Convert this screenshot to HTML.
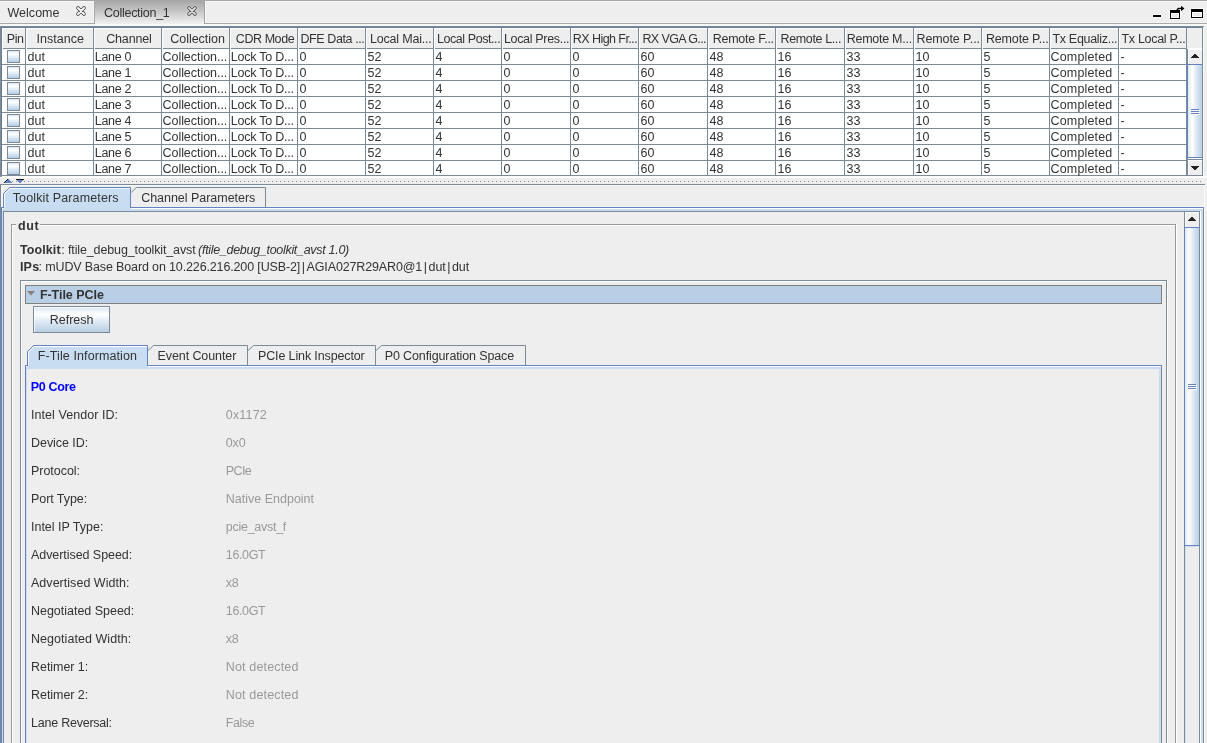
<!DOCTYPE html><html><head><meta charset='utf-8'><title>Collection_1</title><style>
*{box-sizing:border-box;margin:0;padding:0}
html,body{width:1207px;height:743px;overflow:hidden;background:#eee}
body{position:relative;font-family:"Liberation Sans","DejaVu Sans",sans-serif;font-size:12.5px;color:#333;line-height:16px}
#root{position:absolute;left:0;top:0;width:1207px;height:743px;overflow:hidden;will-change:transform}
.a{position:absolute}
.t{position:absolute;white-space:nowrap}
b{font-weight:bold}
</style></head><body>
<div id='root'>
<div class="a" style="left:0px;top:0px;width:1207px;height:1px;background:#a6a6a6"></div>
<div class="a" style="left:0px;top:1px;width:1207px;height:1px;background:#f5f5f5"></div>
<div class="a" style="left:0px;top:22px;width:1207px;height:1px;background:#f3f3f3"></div>
<div class="a" style="left:0px;top:23px;width:1207px;height:1px;background:#a8a8a8"></div>
<div class="a" style="left:0px;top:24px;width:1207px;height:2px;background:#f7f7f7"></div>
<div class="a" style="left:93px;top:1px;width:1px;height:22px;background:#f5f5f5"></div>
<div class="a" style="left:94px;top:1px;width:1px;height:23px;background:#a8a8a8"></div>
<div class="t" style="left:7.5px;top:5px;;letter-spacing:0.02px">Welcome</div>
<div class="a" style="left:95px;top:0px;width:109px;height:24px;background:linear-gradient(#a4a4a4,#c4c4c4 45%,#eeeeee 96%)"></div>
<div class="a" style="left:204px;top:1px;width:1px;height:23px;background:#a0a0a0"></div>
<div class="a" style="left:205px;top:2px;width:1px;height:21px;background:#f9f9f9"></div>
<div class="t" style="left:104.0px;top:5px;;letter-spacing:-0.27px">Collection_1</div>
<svg class="a" style="left:74px;top:4px" width="14" height="14" viewBox="-7 -7 14 14"><g fill="none" stroke-linecap="round"><path d="M-3 -3 L3 3 M3 -3 L-3 3" stroke="#fff" stroke-opacity=".4" stroke-width="5.2"/><path d="M-3 -3 L3 3 M3 -3 L-3 3" stroke="#444" stroke-width="3.7"/><path d="M-3 -3 L3 3 M3 -3 L-3 3" stroke="#f6f6f6" stroke-width="2.1"/></g></svg>
<svg class="a" style="left:185px;top:4px" width="14" height="14" viewBox="-7 -7 14 14"><g fill="none" stroke-linecap="round"><path d="M-3 -3 L3 3 M3 -3 L-3 3" stroke="#fff" stroke-opacity=".4" stroke-width="5.2"/><path d="M-3 -3 L3 3 M3 -3 L-3 3" stroke="#444" stroke-width="3.7"/><path d="M-3 -3 L3 3 M3 -3 L-3 3" stroke="#d8d8d8" stroke-width="2.1"/></g></svg>
<div class="a" style="left:1152px;top:14px;width:10px;height:4px;background:#fafafa"></div>
<div class="a" style="left:1153px;top:15px;width:8px;height:2px;background:#000"></div>
<svg class="a" style="left:1168px;top:4px" width="20" height="17" viewBox="0 0 20 17"><rect x="1" y="5" width="12" height="11" fill="#fafafa"/><path d="M8.5 6.5 L10 4.5 L14 4.5" fill="none" stroke="#fafafa" stroke-width="3.4"/><path d="M12.4 0.6 L17.4 4.5 L12.4 8.4 Z" fill="#fafafa"/><rect x="2" y="6" width="10" height="9" fill="#000"/><rect x="3" y="9" width="8" height="5" fill="#fff"/><rect x="4" y="10" width="6" height="3" fill="#eaeaea"/><path d="M8.7 6.6 L10.2 4.5 L14 4.5" fill="none" stroke="#000" stroke-width="1.5"/><path d="M13 1.7 L16.5 4.5 L13 7.3 Z" fill="#000"/></svg>
<div class="a" style="left:1190px;top:8px;width:14px;height:11px;background:#fafafa"></div>
<div class="a" style="left:1191px;top:9px;width:12px;height:9px;background:#000"></div>
<div class="a" style="left:1192px;top:12px;width:10px;height:5px;background:#fff"></div>
<div class="a" style="left:1193px;top:13px;width:8px;height:3px;background:#eaeaea"></div>
<div class="a" style="left:0px;top:26px;width:1203px;height:150px;background:#fff;border:1px solid #7a8a99"></div>
<div class="a" style="left:1px;top:27px;width:1201px;height:1px;background:#6f8092"></div>
<div class="a" style="left:1px;top:27px;width:1px;height:148px;background:#6f8092"></div>
<div class="a" style="left:1203px;top:26px;width:1px;height:1px;background:#7a8a99"></div>
<div class="a" style="left:2px;top:28px;width:1200px;height:20px;background:#eee"></div>
<div class="a" style="left:2px;top:28px;width:1185px;height:1px;background:#fff"></div>
<div class="a" style="left:2px;top:48px;width:1185px;height:1px;background:#7a8a99"></div>
<div class="a" style="left:25px;top:28px;width:1px;height:147px;background:#7a8a99"></div>
<div class="a" style="left:26px;top:28px;width:1px;height:21px;background:#fff"></div>
<div class="a" style="left:93px;top:28px;width:1px;height:147px;background:#7a8a99"></div>
<div class="a" style="left:94px;top:28px;width:1px;height:21px;background:#fff"></div>
<div class="a" style="left:161px;top:28px;width:1px;height:147px;background:#7a8a99"></div>
<div class="a" style="left:162px;top:28px;width:1px;height:21px;background:#fff"></div>
<div class="a" style="left:229px;top:28px;width:1px;height:147px;background:#7a8a99"></div>
<div class="a" style="left:230px;top:28px;width:1px;height:21px;background:#fff"></div>
<div class="a" style="left:297px;top:28px;width:1px;height:147px;background:#7a8a99"></div>
<div class="a" style="left:298px;top:28px;width:1px;height:21px;background:#fff"></div>
<div class="a" style="left:365px;top:28px;width:1px;height:147px;background:#7a8a99"></div>
<div class="a" style="left:366px;top:28px;width:1px;height:21px;background:#fff"></div>
<div class="a" style="left:433px;top:28px;width:1px;height:147px;background:#7a8a99"></div>
<div class="a" style="left:434px;top:28px;width:1px;height:21px;background:#fff"></div>
<div class="a" style="left:501px;top:28px;width:1px;height:147px;background:#7a8a99"></div>
<div class="a" style="left:502px;top:28px;width:1px;height:21px;background:#fff"></div>
<div class="a" style="left:570px;top:28px;width:1px;height:147px;background:#7a8a99"></div>
<div class="a" style="left:571px;top:28px;width:1px;height:21px;background:#fff"></div>
<div class="a" style="left:638px;top:28px;width:1px;height:147px;background:#7a8a99"></div>
<div class="a" style="left:639px;top:28px;width:1px;height:21px;background:#fff"></div>
<div class="a" style="left:707px;top:28px;width:1px;height:147px;background:#7a8a99"></div>
<div class="a" style="left:708px;top:28px;width:1px;height:21px;background:#fff"></div>
<div class="a" style="left:775px;top:28px;width:1px;height:147px;background:#7a8a99"></div>
<div class="a" style="left:776px;top:28px;width:1px;height:21px;background:#fff"></div>
<div class="a" style="left:844px;top:28px;width:1px;height:147px;background:#7a8a99"></div>
<div class="a" style="left:845px;top:28px;width:1px;height:21px;background:#fff"></div>
<div class="a" style="left:913px;top:28px;width:1px;height:147px;background:#7a8a99"></div>
<div class="a" style="left:914px;top:28px;width:1px;height:21px;background:#fff"></div>
<div class="a" style="left:981px;top:28px;width:1px;height:147px;background:#7a8a99"></div>
<div class="a" style="left:982px;top:28px;width:1px;height:21px;background:#fff"></div>
<div class="a" style="left:1049px;top:28px;width:1px;height:147px;background:#7a8a99"></div>
<div class="a" style="left:1050px;top:28px;width:1px;height:21px;background:#fff"></div>
<div class="a" style="left:1118px;top:28px;width:1px;height:147px;background:#7a8a99"></div>
<div class="a" style="left:1119px;top:28px;width:1px;height:21px;background:#fff"></div>
<div class="a" style="left:1186px;top:28px;width:1px;height:147px;background:#7a8a99"></div>
<div class="a" style="left:2px;top:28px;width:1px;height:21px;background:#fff"></div>
<div class="a" style="left:2px;top:64px;width:1185px;height:1px;background:#7a8a99"></div>
<div class="a" style="left:2px;top:80px;width:1185px;height:1px;background:#7a8a99"></div>
<div class="a" style="left:2px;top:96px;width:1185px;height:1px;background:#7a8a99"></div>
<div class="a" style="left:2px;top:112px;width:1185px;height:1px;background:#7a8a99"></div>
<div class="a" style="left:2px;top:128px;width:1185px;height:1px;background:#7a8a99"></div>
<div class="a" style="left:2px;top:144px;width:1185px;height:1px;background:#7a8a99"></div>
<div class="a" style="left:2px;top:160px;width:1185px;height:1px;background:#7a8a99"></div>
<div class="t" style="left:6.8px;top:31px;;letter-spacing:-0.44px">Pin</div>
<div class="t" style="left:36.6px;top:31px;;letter-spacing:0.03px">Instance</div>
<div class="t" style="left:106.2px;top:31px;;letter-spacing:-0.16px">Channel</div>
<div class="t" style="left:170.2px;top:31px;;letter-spacing:-0.01px">Collection</div>
<div class="t" style="left:235.8px;top:31px;;letter-spacing:-0.43px">CDR Mode</div>
<div class="t" style="left:300.4px;top:31px;;letter-spacing:-0.40px">DFE Data ...</div>
<div class="t" style="left:370.0px;top:31px;;letter-spacing:-0.19px">Local Mai...</div>
<div class="t" style="left:436.9px;top:31px;;letter-spacing:-0.42px">Local Post...</div>
<div class="t" style="left:503.9px;top:31px;;letter-spacing:-0.32px">Local Pres...</div>
<div class="t" style="left:572.8px;top:31px;;letter-spacing:-0.56px">RX High Fr...</div>
<div class="t" style="left:642.4px;top:31px;;letter-spacing:-0.60px">RX VGA G...</div>
<div class="t" style="left:712.7px;top:31px;;letter-spacing:-0.25px">Remote F...</div>
<div class="t" style="left:780.6px;top:31px;;letter-spacing:-0.38px">Remote L...</div>
<div class="t" style="left:846.7px;top:31px;;letter-spacing:-0.26px">Remote M...</div>
<div class="t" style="left:916.5px;top:31px;;letter-spacing:-0.09px">Remote P...</div>
<div class="t" style="left:985.9px;top:31px;;letter-spacing:-0.15px">Remote P...</div>
<div class="t" style="left:1052.4px;top:31px;;letter-spacing:-0.30px">Tx Equaliz...</div>
<div class="t" style="left:1121.5px;top:31px;;letter-spacing:-0.30px">Tx Local P...</div>
<div class="a" style="left:7px;top:50px;width:13px;height:13px;border:1px solid #7a8a99;background:linear-gradient(#dde8f3 0%,#fff 28%,#dde8f3 60%,#b8cfe5 100%)"></div>
<div class="t" style="left:27.5px;top:49px;">dut</div>
<div class="t" style="left:94.8px;top:49px;;letter-spacing:-0.33px">Lane 0</div>
<div class="t" style="left:162.5px;top:49px;;letter-spacing:-0.04px">Collection...</div>
<div class="t" style="left:230.8px;top:49px;;letter-spacing:-0.24px">Lock To D...</div>
<div class="t" style="left:299.5px;top:49px;">0</div>
<div class="t" style="left:367.5px;top:49px;">52</div>
<div class="t" style="left:435.5px;top:49px;">4</div>
<div class="t" style="left:503.5px;top:49px;">0</div>
<div class="t" style="left:572.5px;top:49px;">0</div>
<div class="t" style="left:640.5px;top:49px;">60</div>
<div class="t" style="left:709.5px;top:49px;">48</div>
<div class="t" style="left:777.5px;top:49px;">16</div>
<div class="t" style="left:846.5px;top:49px;">33</div>
<div class="t" style="left:915.5px;top:49px;">10</div>
<div class="t" style="left:983.5px;top:49px;">5</div>
<div class="t" style="left:1050.5px;top:49px;;letter-spacing:0.17px">Completed</div>
<div class="t" style="left:1120.5px;top:49px;">-</div>
<div class="a" style="left:7px;top:66px;width:13px;height:13px;border:1px solid #7a8a99;background:linear-gradient(#dde8f3 0%,#fff 28%,#dde8f3 60%,#b8cfe5 100%)"></div>
<div class="t" style="left:27.5px;top:65px;">dut</div>
<div class="t" style="left:94.8px;top:65px;;letter-spacing:-0.33px">Lane 1</div>
<div class="t" style="left:162.5px;top:65px;;letter-spacing:-0.04px">Collection...</div>
<div class="t" style="left:230.8px;top:65px;;letter-spacing:-0.24px">Lock To D...</div>
<div class="t" style="left:299.5px;top:65px;">0</div>
<div class="t" style="left:367.5px;top:65px;">52</div>
<div class="t" style="left:435.5px;top:65px;">4</div>
<div class="t" style="left:503.5px;top:65px;">0</div>
<div class="t" style="left:572.5px;top:65px;">0</div>
<div class="t" style="left:640.5px;top:65px;">60</div>
<div class="t" style="left:709.5px;top:65px;">48</div>
<div class="t" style="left:777.5px;top:65px;">16</div>
<div class="t" style="left:846.5px;top:65px;">33</div>
<div class="t" style="left:915.5px;top:65px;">10</div>
<div class="t" style="left:983.5px;top:65px;">5</div>
<div class="t" style="left:1050.5px;top:65px;;letter-spacing:0.17px">Completed</div>
<div class="t" style="left:1120.5px;top:65px;">-</div>
<div class="a" style="left:7px;top:82px;width:13px;height:13px;border:1px solid #7a8a99;background:linear-gradient(#dde8f3 0%,#fff 28%,#dde8f3 60%,#b8cfe5 100%)"></div>
<div class="t" style="left:27.5px;top:81px;">dut</div>
<div class="t" style="left:94.8px;top:81px;;letter-spacing:-0.33px">Lane 2</div>
<div class="t" style="left:162.5px;top:81px;;letter-spacing:-0.04px">Collection...</div>
<div class="t" style="left:230.8px;top:81px;;letter-spacing:-0.24px">Lock To D...</div>
<div class="t" style="left:299.5px;top:81px;">0</div>
<div class="t" style="left:367.5px;top:81px;">52</div>
<div class="t" style="left:435.5px;top:81px;">4</div>
<div class="t" style="left:503.5px;top:81px;">0</div>
<div class="t" style="left:572.5px;top:81px;">0</div>
<div class="t" style="left:640.5px;top:81px;">60</div>
<div class="t" style="left:709.5px;top:81px;">48</div>
<div class="t" style="left:777.5px;top:81px;">16</div>
<div class="t" style="left:846.5px;top:81px;">33</div>
<div class="t" style="left:915.5px;top:81px;">10</div>
<div class="t" style="left:983.5px;top:81px;">5</div>
<div class="t" style="left:1050.5px;top:81px;;letter-spacing:0.17px">Completed</div>
<div class="t" style="left:1120.5px;top:81px;">-</div>
<div class="a" style="left:7px;top:98px;width:13px;height:13px;border:1px solid #7a8a99;background:linear-gradient(#dde8f3 0%,#fff 28%,#dde8f3 60%,#b8cfe5 100%)"></div>
<div class="t" style="left:27.5px;top:97px;">dut</div>
<div class="t" style="left:94.8px;top:97px;;letter-spacing:-0.33px">Lane 3</div>
<div class="t" style="left:162.5px;top:97px;;letter-spacing:-0.04px">Collection...</div>
<div class="t" style="left:230.8px;top:97px;;letter-spacing:-0.24px">Lock To D...</div>
<div class="t" style="left:299.5px;top:97px;">0</div>
<div class="t" style="left:367.5px;top:97px;">52</div>
<div class="t" style="left:435.5px;top:97px;">4</div>
<div class="t" style="left:503.5px;top:97px;">0</div>
<div class="t" style="left:572.5px;top:97px;">0</div>
<div class="t" style="left:640.5px;top:97px;">60</div>
<div class="t" style="left:709.5px;top:97px;">48</div>
<div class="t" style="left:777.5px;top:97px;">16</div>
<div class="t" style="left:846.5px;top:97px;">33</div>
<div class="t" style="left:915.5px;top:97px;">10</div>
<div class="t" style="left:983.5px;top:97px;">5</div>
<div class="t" style="left:1050.5px;top:97px;;letter-spacing:0.17px">Completed</div>
<div class="t" style="left:1120.5px;top:97px;">-</div>
<div class="a" style="left:7px;top:114px;width:13px;height:13px;border:1px solid #7a8a99;background:linear-gradient(#dde8f3 0%,#fff 28%,#dde8f3 60%,#b8cfe5 100%)"></div>
<div class="t" style="left:27.5px;top:113px;">dut</div>
<div class="t" style="left:94.8px;top:113px;;letter-spacing:-0.33px">Lane 4</div>
<div class="t" style="left:162.5px;top:113px;;letter-spacing:-0.04px">Collection...</div>
<div class="t" style="left:230.8px;top:113px;;letter-spacing:-0.24px">Lock To D...</div>
<div class="t" style="left:299.5px;top:113px;">0</div>
<div class="t" style="left:367.5px;top:113px;">52</div>
<div class="t" style="left:435.5px;top:113px;">4</div>
<div class="t" style="left:503.5px;top:113px;">0</div>
<div class="t" style="left:572.5px;top:113px;">0</div>
<div class="t" style="left:640.5px;top:113px;">60</div>
<div class="t" style="left:709.5px;top:113px;">48</div>
<div class="t" style="left:777.5px;top:113px;">16</div>
<div class="t" style="left:846.5px;top:113px;">33</div>
<div class="t" style="left:915.5px;top:113px;">10</div>
<div class="t" style="left:983.5px;top:113px;">5</div>
<div class="t" style="left:1050.5px;top:113px;;letter-spacing:0.17px">Completed</div>
<div class="t" style="left:1120.5px;top:113px;">-</div>
<div class="a" style="left:7px;top:130px;width:13px;height:13px;border:1px solid #7a8a99;background:linear-gradient(#dde8f3 0%,#fff 28%,#dde8f3 60%,#b8cfe5 100%)"></div>
<div class="t" style="left:27.5px;top:129px;">dut</div>
<div class="t" style="left:94.8px;top:129px;;letter-spacing:-0.33px">Lane 5</div>
<div class="t" style="left:162.5px;top:129px;;letter-spacing:-0.04px">Collection...</div>
<div class="t" style="left:230.8px;top:129px;;letter-spacing:-0.24px">Lock To D...</div>
<div class="t" style="left:299.5px;top:129px;">0</div>
<div class="t" style="left:367.5px;top:129px;">52</div>
<div class="t" style="left:435.5px;top:129px;">4</div>
<div class="t" style="left:503.5px;top:129px;">0</div>
<div class="t" style="left:572.5px;top:129px;">0</div>
<div class="t" style="left:640.5px;top:129px;">60</div>
<div class="t" style="left:709.5px;top:129px;">48</div>
<div class="t" style="left:777.5px;top:129px;">16</div>
<div class="t" style="left:846.5px;top:129px;">33</div>
<div class="t" style="left:915.5px;top:129px;">10</div>
<div class="t" style="left:983.5px;top:129px;">5</div>
<div class="t" style="left:1050.5px;top:129px;;letter-spacing:0.17px">Completed</div>
<div class="t" style="left:1120.5px;top:129px;">-</div>
<div class="a" style="left:7px;top:146px;width:13px;height:13px;border:1px solid #7a8a99;background:linear-gradient(#dde8f3 0%,#fff 28%,#dde8f3 60%,#b8cfe5 100%)"></div>
<div class="t" style="left:27.5px;top:145px;">dut</div>
<div class="t" style="left:94.8px;top:145px;;letter-spacing:-0.33px">Lane 6</div>
<div class="t" style="left:162.5px;top:145px;;letter-spacing:-0.04px">Collection...</div>
<div class="t" style="left:230.8px;top:145px;;letter-spacing:-0.24px">Lock To D...</div>
<div class="t" style="left:299.5px;top:145px;">0</div>
<div class="t" style="left:367.5px;top:145px;">52</div>
<div class="t" style="left:435.5px;top:145px;">4</div>
<div class="t" style="left:503.5px;top:145px;">0</div>
<div class="t" style="left:572.5px;top:145px;">0</div>
<div class="t" style="left:640.5px;top:145px;">60</div>
<div class="t" style="left:709.5px;top:145px;">48</div>
<div class="t" style="left:777.5px;top:145px;">16</div>
<div class="t" style="left:846.5px;top:145px;">33</div>
<div class="t" style="left:915.5px;top:145px;">10</div>
<div class="t" style="left:983.5px;top:145px;">5</div>
<div class="t" style="left:1050.5px;top:145px;;letter-spacing:0.17px">Completed</div>
<div class="t" style="left:1120.5px;top:145px;">-</div>
<div class="a" style="left:7px;top:162px;width:13px;height:13px;border:1px solid #7a8a99;background:linear-gradient(#dde8f3 0%,#fff 28%,#dde8f3 60%,#b8cfe5 100%)"></div>
<div class="t" style="left:27.5px;top:161px;">dut</div>
<div class="t" style="left:94.8px;top:161px;;letter-spacing:-0.33px">Lane 7</div>
<div class="t" style="left:162.5px;top:161px;;letter-spacing:-0.04px">Collection...</div>
<div class="t" style="left:230.8px;top:161px;;letter-spacing:-0.24px">Lock To D...</div>
<div class="t" style="left:299.5px;top:161px;">0</div>
<div class="t" style="left:367.5px;top:161px;">52</div>
<div class="t" style="left:435.5px;top:161px;">4</div>
<div class="t" style="left:503.5px;top:161px;">0</div>
<div class="t" style="left:572.5px;top:161px;">0</div>
<div class="t" style="left:640.5px;top:161px;">60</div>
<div class="t" style="left:709.5px;top:161px;">48</div>
<div class="t" style="left:777.5px;top:161px;">16</div>
<div class="t" style="left:846.5px;top:161px;">33</div>
<div class="t" style="left:915.5px;top:161px;">10</div>
<div class="t" style="left:983.5px;top:161px;">5</div>
<div class="t" style="left:1050.5px;top:161px;;letter-spacing:0.17px">Completed</div>
<div class="t" style="left:1120.5px;top:161px;">-</div>
<div class="a" style="left:1187px;top:49px;width:15px;height:126px;background:#eee"></div>
<div class="a" style="left:1187px;top:49px;width:1px;height:126px;background:#7a8a99"></div>
<div class="a" style="left:1188px;top:49px;width:14px;height:15px;background:#eee;border-left:1px solid #fff;border-top:1px solid #fff"></div>
<svg class="a" style="left:1191px;top:54px" width="8" height="4" viewBox="0 0 8 4" shape-rendering="crispEdges" fill="#222"><rect x="3" y="0" width="2" height="1"/><rect x="2" y="1" width="4" height="1"/><rect x="1" y="2" width="6" height="1"/><rect x="0" y="3" width="8" height="1"/></svg>
<div class="a" style="left:1187px;top:64px;width:15px;height:94px;background:linear-gradient(90deg,#dde8f3 0%,#fff 30%,#dde8f3 60%,#b8cfe5 100%);border:1px solid #6382bf;border-right:0"></div>
<div class="a" style="left:1191px;top:109px;width:8px;height:1px;background:#6382bf"></div>
<div class="a" style="left:1192px;top:110px;width:8px;height:1px;background:#fff"></div>
<div class="a" style="left:1191px;top:111px;width:8px;height:1px;background:#6382bf"></div>
<div class="a" style="left:1192px;top:112px;width:8px;height:1px;background:#fff"></div>
<div class="a" style="left:1191px;top:113px;width:8px;height:1px;background:#6382bf"></div>
<div class="a" style="left:1192px;top:114px;width:8px;height:1px;background:#fff"></div>
<div class="a" style="left:1188px;top:158px;width:14px;height:1px;background:#fff"></div>
<div class="a" style="left:1187px;top:159px;width:15px;height:16px;background:#eee;border-top:1px solid #7a8a99;border-left:1px solid #7a8a99"></div>
<div class="a" style="left:1188px;top:160px;width:14px;height:15px;border-left:1px solid #fff;border-top:1px solid #fff"></div>
<svg class="a" style="left:1191px;top:166px" width="8" height="4" viewBox="0 0 8 4" shape-rendering="crispEdges" fill="#222"><rect x="0" y="0" width="8" height="1"/><rect x="1" y="1" width="6" height="1"/><rect x="2" y="2" width="4" height="1"/><rect x="3" y="3" width="2" height="1"/></svg>
<div class="a" style="left:1203px;top:27px;width:1px;height:149px;background:#fafafa"></div>
<div class="a" style="left:0px;top:176px;width:1207px;height:2px;background:#fdfdfd"></div>
<div class="a" style="left:0px;top:176px;width:2px;height:1px;background:#8f9dab"></div>
<svg class="a" style="left:0;top:178px" width="1207" height="6" viewBox="0 0 1207 6" shape-rendering="crispEdges"><line x1="12" y1="3.5" x2="1203" y2="3.5" stroke="#7d8fa8" stroke-width="1" stroke-dasharray="1 3"/><g fill="#6382bf"><rect x="7" y="1" width="2" height="1"/><rect x="6" y="2" width="4" height="1"/><rect x="5" y="3" width="6" height="1"/><rect x="4" y="4" width="8" height="1"/><rect x="17" y="2" width="6" height="1"/><rect x="18" y="3" width="4" height="1"/><rect x="19" y="4" width="2" height="1"/></g><g fill="#1a1a1a"><rect x="7" y="1" width="1" height="1"/><rect x="6" y="2" width="1" height="1"/><rect x="5" y="3" width="1" height="1"/><rect x="4" y="4" width="1" height="1"/><rect x="16" y="1" width="8" height="1"/></g></svg>
<div class="a" style="left:0px;top:184px;width:1205px;height:1px;background:#7a8a99"></div>
<div class="a" style="left:0px;top:185px;width:1px;height:560px;background:#7a8a99"></div>
<div class="a" style="left:1px;top:185px;width:1204px;height:1px;background:#f8f8f8"></div>
<div class="a" style="left:1px;top:185px;width:2px;height:22px;background:#f7f5f3"></div>
<div class="a" style="left:266px;top:206px;width:938px;height:1px;background:#f7f5f3"></div>
<div class="a" style="left:1px;top:207px;width:1203px;height:540px;border:1px solid #6382bf;border-right-color:#7a8a99;background:#c8ddf2"></div>
<div class="a" style="left:2px;top:208px;width:1201px;height:1px;background:#fff"></div>
<div class="a" style="left:3px;top:211px;width:1197px;height:540px;border:1px solid #7a8a99;background:#eee"></div>
<div class="a" style="left:1200px;top:211px;width:1px;height:540px;background:#fff"></div>
<svg class="a" style="left:1px;top:186px" width="270" height="24" viewBox="0 0 270 24"><path d="M2.5 22 L2.5 7.5 L8.5 1.5 L129.5 1.5 L129.5 22 Z" fill="#c8ddf2" stroke="#6382bf" stroke-width="1"/><path d="M3.5 22 L3.5 8 L9 2.5 L129 2.5" fill="none" stroke="#fff" stroke-width="1"/><path d="M3 22 L129 22" stroke="#c8ddf2" stroke-width="2"/><path d="M3.5 22.5 L4 22.5" stroke="#fff" stroke-width="1"/><path d="M130 6.5 L135.5 1.5 L264.5 1.5 L264.5 21.5 L130 21.5" fill="#eee" stroke="#7a8a99" stroke-width="1"/><path d="M130 21.5 L265 21.5" stroke="#6382bf" stroke-width="1"/></svg>
<div class="t" style="left:12.7px;top:190px;;letter-spacing:0.14px">Toolkit Parameters</div>
<div class="t" style="left:141.2px;top:190px;;letter-spacing:-0.03px">Channel Parameters</div>
<div class="a" style="left:1184px;top:212px;width:15px;height:540px;background:#eee;border-left:1px solid #7a8a99"></div>
<div class="a" style="left:1185px;top:212px;width:14px;height:15px;background:#eee;border-left:1px solid #fff;border-top:1px solid #fff"></div>
<svg class="a" style="left:1188px;top:217px" width="8" height="4" viewBox="0 0 8 4" shape-rendering="crispEdges" fill="#222"><rect x="3" y="0" width="2" height="1"/><rect x="2" y="1" width="4" height="1"/><rect x="1" y="2" width="6" height="1"/><rect x="0" y="3" width="8" height="1"/></svg>
<div class="a" style="left:1184px;top:227px;width:15px;height:319px;background:linear-gradient(90deg,#dde8f3 0%,#fff 30%,#dde8f3 60%,#b8cfe5 100%);border:1px solid #6382bf;border-right:0"></div>
<div class="a" style="left:1188px;top:384px;width:8px;height:1px;background:#6382bf"></div>
<div class="a" style="left:1189px;top:385px;width:8px;height:1px;background:#fff"></div>
<div class="a" style="left:1188px;top:386px;width:8px;height:1px;background:#6382bf"></div>
<div class="a" style="left:1189px;top:387px;width:8px;height:1px;background:#fff"></div>
<div class="a" style="left:1188px;top:388px;width:8px;height:1px;background:#6382bf"></div>
<div class="a" style="left:1189px;top:389px;width:8px;height:1px;background:#fff"></div>
<div class="a" style="left:1185px;top:546px;width:1px;height:200px;background:#cfe0f1"></div>
<div class="a" style="left:1185px;top:546px;width:13px;height:1px;background:#cfe0f1"></div>
<div class="a" style="left:11px;top:224px;width:1165px;height:540px;border:1px solid #999"></div>
<div class="a" style="left:12px;top:225px;width:1163px;height:540px;border-left:1px solid #fff;border-top:1px solid #fff"></div>
<div class="a" style="left:1176px;top:224px;width:1px;height:540px;background:#fff"></div>
<div class="a" style="left:16px;top:218px;width:24px;height:14px;background:#eee"></div>
<div class="t" style="left:17.9px;top:218px;;letter-spacing:0.63px"><b>dut</b></div>
<div class="t" style="left:19.9px;top:242px;;letter-spacing:0.11px"><b>Toolkit</b></div>
<div class="t" style="left:61.3px;top:242px;;letter-spacing:-0.13px">: ftile_debug_toolkit_avst</div>
<div class="t" style="left:198.1px;top:242px;;letter-spacing:-0.30px"><i>(ftile_debug_toolkit_avst 1.0)</i></div>
<div class="t" style="left:19.9px;top:259px;;letter-spacing:0.22px"><b>IPs</b></div>
<div class="t" style="left:38.6px;top:259px;;letter-spacing:-0.14px">: mUDV Base Board on 10.226.216.200 [USB-2]<span style="padding:0 1.7px">|</span>AGIA027R29AR0@1<span style="padding:0 1.7px">|</span>dut<span style="padding:0 1.7px">|</span>dut</div>
<div class="a" style="left:21px;top:281px;width:1147px;height:480px;border:1px solid #fff"></div>
<div class="a" style="left:20px;top:280px;width:1147px;height:480px;border:1px solid #7a8a99"></div>
<div class="a" style="left:25px;top:285px;width:1137px;height:19px;background:#b8cfe5;border:1px solid #808080"></div>
<svg class="a" style="left:27px;top:291px" width="8" height="5" viewBox="0 0 8 5"><path d="M0 0 L8 0 L4 4.5 Z" fill="#857f7f"/></svg>
<div class="t" style="left:39.9px;top:287px;;letter-spacing:-0.04px"><b>F-Tile PCIe</b></div>
<div class="a" style="left:33px;top:306px;width:77px;height:27px;border:1px solid #7a8a99;background:linear-gradient(#dde8f3 0%,#fff 30%,#dde8f3 60%,#b8cfe5 100%)"></div>
<div class="a" style="left:34px;top:307px;width:75px;height:25px;border:1px solid #fff;border-right:0;border-bottom:0;opacity:.8"></div>
<div class="t" style="left:49.8px;top:312px;;letter-spacing:-0.01px">Refresh</div>
<div class="a" style="left:25px;top:365px;width:1137px;height:400px;border:1px solid #6382bf;border-right-color:#7a8a99;background:#c8ddf2"></div>
<div class="a" style="left:26px;top:366px;width:1135px;height:1px;background:#fff"></div>
<div class="a" style="left:27px;top:369px;width:1132px;height:400px;background:#eee"></div>
<svg class="a" style="left:25px;top:344px" width="510" height="24" viewBox="0 0 510 24"><path d="M2.5 22 L2.5 7.5 L8.5 1.5 L122.5 1.5 L122.5 22 Z" fill="#c8ddf2" stroke="#6382bf" stroke-width="1"/><path d="M3.5 22 L3.5 8 L9 2.5 L122 2.5" fill="none" stroke="#fff" stroke-width="1"/><path d="M3 22 L122 22" stroke="#c8ddf2" stroke-width="2"/><path d="M123 6.5 L128.5 1.5 L222.5 1.5 L222.5 21.5 L123 21.5" fill="#eee" stroke="#7a8a99" stroke-width="1"/><path d="M223 6.5 L228.5 1.5 L350.5 1.5 L350.5 21.5 L223 21.5" fill="#eee" stroke="#7a8a99" stroke-width="1"/><path d="M351 6.5 L356.5 1.5 L500.5 1.5 L500.5 21.5 L351 21.5" fill="#eee" stroke="#7a8a99" stroke-width="1"/><path d="M123 21.5 L501 21.5" stroke="#6382bf" stroke-width="1"/></svg>
<div class="t" style="left:37.8px;top:348px;;letter-spacing:0.10px">F-Tile Information</div>
<div class="t" style="left:157.5px;top:348px;;letter-spacing:-0.09px">Event Counter</div>
<div class="t" style="left:258.0px;top:348px;;letter-spacing:-0.13px">PCIe Link Inspector</div>
<div class="t" style="left:384.7px;top:348px;;letter-spacing:-0.12px">P0 Configuration Space</div>
<div class="t" style="left:30.8px;top:379px;color:#0000ff;letter-spacing:-0.36px"><b>P0 Core</b></div>
<div class="t" style="left:31.0px;top:407px;;letter-spacing:0.06px">Intel Vendor ID:</div>
<div class="t" style="left:225.8px;top:407px;color:#999;letter-spacing:0.18px">0x1172</div>
<div class="t" style="left:31.0px;top:435px;;letter-spacing:-0.05px">Device ID:</div>
<div class="t" style="left:225.8px;top:435px;color:#999;letter-spacing:-0.18px">0x0</div>
<div class="t" style="left:31.0px;top:463px;;letter-spacing:-0.03px">Protocol:</div>
<div class="t" style="left:225.8px;top:463px;color:#999;letter-spacing:-0.60px">PCIe</div>
<div class="t" style="left:31.0px;top:491px;;letter-spacing:-0.07px">Port Type:</div>
<div class="t" style="left:225.8px;top:491px;color:#999;letter-spacing:-0.00px">Native Endpoint</div>
<div class="t" style="left:31.0px;top:519px;;letter-spacing:-0.01px">Intel IP Type:</div>
<div class="t" style="left:225.8px;top:519px;color:#999;letter-spacing:-0.27px">pcie_avst_f</div>
<div class="t" style="left:31.0px;top:547px;;letter-spacing:-0.06px">Advertised Speed:</div>
<div class="t" style="left:225.8px;top:547px;color:#999;letter-spacing:-0.36px">16.0GT</div>
<div class="t" style="left:31.0px;top:575px;;letter-spacing:0.03px">Advertised Width:</div>
<div class="t" style="left:225.8px;top:575px;color:#999;letter-spacing:-0.40px">x8</div>
<div class="t" style="left:31.0px;top:603px;;letter-spacing:-0.02px">Negotiated Speed:</div>
<div class="t" style="left:225.8px;top:603px;color:#999;letter-spacing:-0.36px">16.0GT</div>
<div class="t" style="left:31.0px;top:631px;;letter-spacing:0.05px">Negotiated Width:</div>
<div class="t" style="left:225.8px;top:631px;color:#999;letter-spacing:-0.40px">x8</div>
<div class="t" style="left:31.0px;top:659px;;letter-spacing:-0.05px">Retimer 1:</div>
<div class="t" style="left:225.8px;top:659px;color:#999;letter-spacing:0.15px">Not detected</div>
<div class="t" style="left:31.0px;top:687px;;letter-spacing:-0.05px">Retimer 2:</div>
<div class="t" style="left:225.8px;top:687px;color:#999;letter-spacing:0.15px">Not detected</div>
<div class="t" style="left:31.0px;top:715px;;letter-spacing:-0.23px">Lane Reversal:</div>
<div class="t" style="left:225.8px;top:715px;color:#999;letter-spacing:-0.39px">False</div>
<div class="a" style="left:1204px;top:185px;width:1px;height:560px;background:#fbfbfb"></div>
</div>
</body></html>
